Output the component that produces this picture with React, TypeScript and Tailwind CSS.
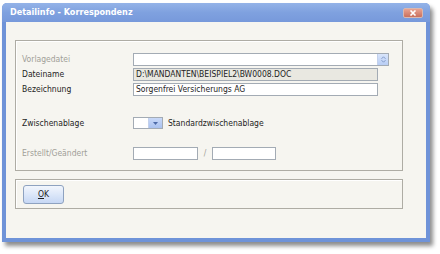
import React from "react"

const font = { fontFamily: '"DejaVu Sans Condensed", "DejaVu Sans", sans-serif' }

function Field({ className = "", children }: { className?: string; children?: React.ReactNode }) {
    return (
        <div className={"h-[13px] border border-[#a3abb4] flex items-center px-[2px] text-[8.5px] text-[#1e1e1e] leading-none " + className}>
            {children}
        </div>
    )
}

export default function App() {
    return (
        <div className="w-[440px] h-[254px] bg-white relative" style={font}>
            {/* Window */}
            <div className="absolute left-[2px] top-[3px] w-[428px] h-[239px] flex flex-col rounded-t-[5px] bg-[#6f93d8] shadow-[3px_4px_4px_rgba(0,0,0,0.45)]">
                {/* Title bar */}
                <div className="h-[19px] flex items-center justify-between pl-[8px] pr-[7px] rounded-t-[5px] bg-gradient-to-b from-[#94b3e8] via-[#7fa1df] to-[#7799db]">
                    <span className="text-white font-bold text-[9px]">Detailinfo - Korrespondenz</span>
                    <div className="w-[20px] h-[10px] rounded-[2px] border border-[#d9b8b0] bg-gradient-to-b from-[#e9a391] to-[#c9705e] flex items-center justify-center">
                        <svg width="8" height="6" viewBox="0 0 8 6">
                            <path d="M1.5 0.5 L6.5 5.5 M6.5 0.5 L1.5 5.5" stroke="white" strokeWidth="1.6" />
                        </svg>
                    </div>
                </div>

                {/* Body */}
                <div className="flex-1 mx-[4px] mb-[4px] bg-[#f6f5f0] pl-[9px] pt-[18px] flex flex-col">
                    {/* Group 1 */}
                    <div className="w-[388px] h-[131px] border border-[#aeaca4] shadow-[inset_1px_1px_0_#ffffff] pl-[6px] pt-[12px] flex flex-col">
                        <div className="flex items-center h-[13px]">
                            <span className="w-[111px] text-[8.5px] text-[#a19f98]">Vorlagedatei</span>
                            <Field className="w-[256px] bg-white justify-end pr-0">
                                <div className="w-[11px] h-[11px] bg-gradient-to-b from-[#d9e5fb] to-[#b8cdf4] border-l border-[#c3d1ec] flex items-center justify-center">
                                    <svg width="5" height="7" viewBox="0 0 5 7">
                                        <path d="M0.5 2.8 L2.5 0.8 L4.5 2.8 M0.5 4.2 L2.5 6.2 L4.5 4.2" stroke="#7a93c4" strokeWidth="0.9" fill="none" />
                                    </svg>
                                </div>
                            </Field>
                        </div>
                        <div className="flex items-center h-[13px] mt-[2px]">
                            <span className="w-[111px] text-[8.5px] text-[#1e1e1e]">Dateiname</span>
                            <Field className="w-[245px] bg-[#e9e8e1]">D:\MANDANTEN\BEISPIEL2\BW0008.DOC</Field>
                        </div>
                        <div className="flex items-center h-[13px] mt-[2px]">
                            <span className="w-[111px] text-[8.5px] text-[#1e1e1e]">Bezeichnung</span>
                            <Field className="w-[245px] bg-white">Sorgenfrei Versicherungs AG</Field>
                        </div>

                        <div className="flex items-center h-[12px] mt-[21px]">
                            <span className="w-[111px] text-[8.5px] text-[#1e1e1e]">Zwischenablage</span>
                            <div className="w-[30px] h-[12px] border border-[#a3abb4] bg-white flex justify-end">
                                <div className="w-[14px] h-full bg-gradient-to-b from-[#c9d9f8] to-[#aac2f0] border-l border-[#c3d1ec] flex items-center justify-center">
                                    <svg width="5" height="3" viewBox="0 0 5 3">
                                        <path d="M0 0 L5 0 L2.5 3 Z" fill="#4d6aa8" />
                                    </svg>
                                </div>
                            </div>
                            <span className="ml-[5px] text-[8.5px] text-[#1e1e1e]">Standardzwischenablage</span>
                        </div>

                        <div className="flex items-center h-[13px] mt-[18px]">
                            <span className="w-[111px] text-[8.5px] text-[#a19f98]">Erstellt/Geändert</span>
                            <Field className="w-[65px] bg-white" />
                            <span className="w-[14px] text-center text-[8.5px] text-[#a19f98]">/</span>
                            <Field className="w-[64px] bg-white" />
                        </div>
                    </div>

                    {/* Group 2 */}
                    <div className="w-[388px] h-[30px] mt-[8px] border border-[#aeaca4] shadow-[inset_1px_1px_0_#ffffff] pl-[7px] flex items-center">
                        <button className="w-[41px] h-[19px] rounded-[3px] border border-[#8ea2c0] bg-gradient-to-b from-[#f2f6fd] via-[#dce7f9] to-[#c6d7f4] text-[8.5px] text-[#1e1e1e] flex items-center justify-center">
                            <span><span className="underline">O</span>K</span>
                        </button>
                    </div>
                </div>
            </div>
        </div>
    )
}
